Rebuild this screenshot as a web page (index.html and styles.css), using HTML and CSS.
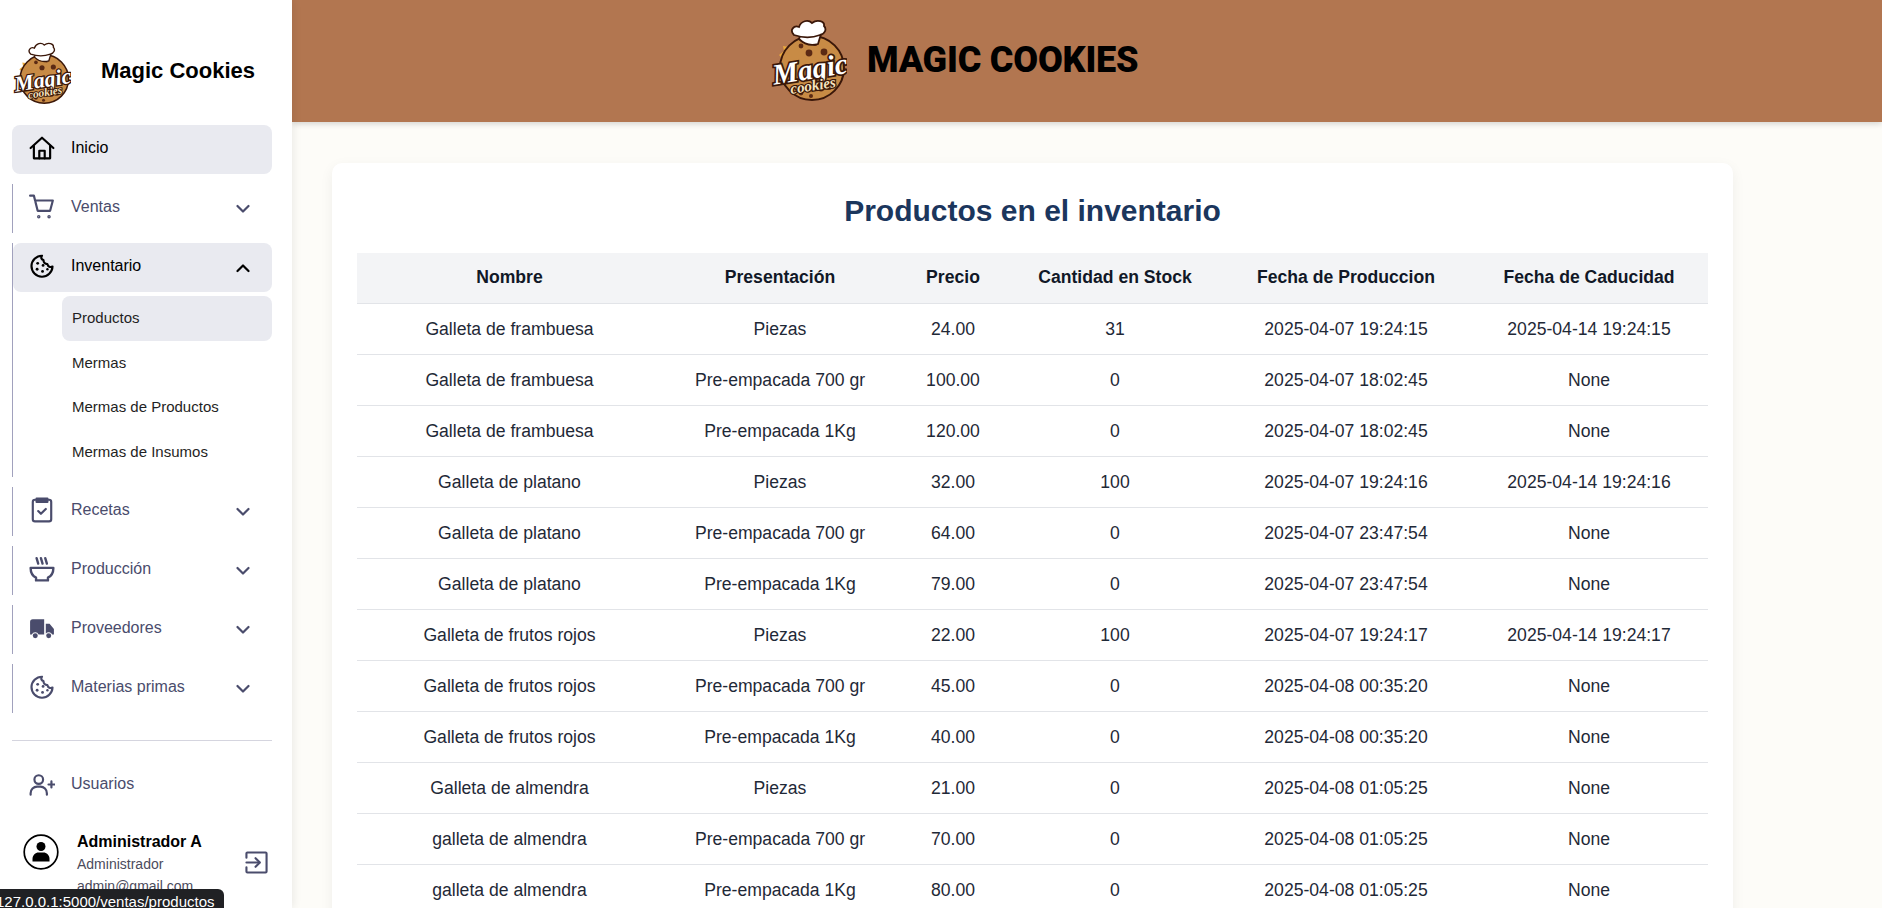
FILE: index.html
```html
<!DOCTYPE html>
<html lang="es">
<head>
<meta charset="utf-8">
<title>Magic Cookies</title>
<link rel="stylesheet" href="styles.css">
</head>
<body>
<svg class="defs" width="0" height="0" aria-hidden="true">
  <defs>
    <symbol id="logo" viewBox="0 0 76 82">
      <path d="M8 36l5-4-1-5 6 1 4-5 30-3 7 4 5 8-6 12-40 2z" fill="#e9a93c"/>
      <circle cx="41" cy="49" r="32" fill="#c88b45" stroke="#3a1709" stroke-width="2"/>
      <circle cx="44" cy="24" r="3" fill="#5b2a14"/><circle cx="53" cy="33" r="3.400" fill="#5b2a14"/>
      <circle cx="38" cy="34" r="3.400" fill="#5b2a14"/><circle cx="30" cy="27" r="2.400" fill="#5b2a14"/>
      <circle cx="50" cy="69" r="3.400" fill="#5b2a14"/><circle cx="58" cy="68" r="3" fill="#5b2a14"/>
      <circle cx="30" cy="74" r="2.400" fill="#5b2a14"/><circle cx="40" cy="77" r="2" fill="#5b2a14"/>
      <path d="M28 20l3-9 19 4-3 10c-7 2-14 0-19-5z" fill="#fff" stroke="#3a1709" stroke-width="1.800"/>
      <path d="M23 16c-5-5 0-10 5-8 2-6 9-8 13-4 5-4 13-2 12 3 3 3 1 8-4 9-8 3-17 3-26 0z" fill="#fff" stroke="#3a1709" stroke-width="1.800"/>
      <text class="logo-magic" x="1" y="60" transform="rotate(-9 38 50)">Magic</text>
      <text class="logo-cookies" x="18" y="72" transform="rotate(-9 38 60)">cookies</text>
    </symbol>
    <symbol id="cookie" viewBox="0 0 24 24">
      <path d="M12 2.500a9.700 9.700 0 1 0 9.700 10c-2.200 1-4.200 0-4.700-2.200-2.200 0-3.700-1.500-3.600-3.700-2.200-.5-2.600-2.400-1.400-4.100z" fill="none" stroke="currentColor" stroke-width="2" stroke-linejoin="round"/>
      <circle cx="8" cy="9.500" r="1.300" fill="currentColor"/><circle cx="13" cy="11.500" r="1.300" fill="currentColor"/>
      <circle cx="7.500" cy="15" r="1.300" fill="currentColor"/><circle cx="12.500" cy="17" r="1.300" fill="currentColor"/>
      <circle cx="17" cy="15" r="1.100" fill="currentColor"/>
    </symbol>
    <symbol id="chev-down" viewBox="0 0 14 10">
      <path d="M1.500 2l5.500 5.500L12.500 2" fill="none" stroke="currentColor" stroke-width="2.200" stroke-linecap="round" stroke-linejoin="round"/>
    </symbol>
    <symbol id="chev-up" viewBox="0 0 14 10">
      <path d="M1.500 8L7 2.500 12.500 8" fill="none" stroke="currentColor" stroke-width="2.200" stroke-linecap="round" stroke-linejoin="round"/>
    </symbol>
  </defs>
</svg>

<div class="app">
  <aside class="sidebar">
    <div class="brand">
      <svg class="brand-logo"><use href="#logo"/></svg>
      <span class="brand-name">Magic Cookies</span>
    </div>
    <nav class="nav">
      <a class="item active">
        <svg class="icon" viewBox="0 0 24 24" fill="none" stroke="currentColor" stroke-width="2" stroke-linejoin="round" stroke-linecap="round"><path d="M1.500 12L12 2.500 22.500 12"/><path d="M4.500 10v11.500h15V10"/><path d="M9.500 21.500v-7h5v7"/></svg>
        <span class="label">Inicio</span>
      </a>
      <div class="group">
        <a class="item">
          <svg class="icon" viewBox="0 0 24 24" fill="none" stroke="currentColor" stroke-width="2" stroke-linejoin="round" stroke-linecap="round"><path d="M1 1.500h3.500l3.500 14h11.500L22 6H5.500"/><circle cx="9" cy="21" r=".6"/><circle cx="18.500" cy="21" r=".6"/></svg>
          <span class="label">Ventas</span>
          <svg class="chev"><use href="#chev-down"/></svg>
        </a>
      </div>
      <div class="group">
        <a class="item open">
          <svg class="icon"><use href="#cookie"/></svg>
          <span class="label">Inventario</span>
          <svg class="chev"><use href="#chev-up"/></svg>
        </a>
        <div class="sub">
          <a class="sub-item current">Productos</a>
          <a class="sub-item">Mermas</a>
          <a class="sub-item">Mermas de Productos</a>
          <a class="sub-item">Mermas de Insumos</a>
        </div>
      </div>
      <div class="group">
        <a class="item">
          <svg class="icon" viewBox="0 0 24 24" fill="none" stroke="currentColor" stroke-width="2" stroke-linejoin="round" stroke-linecap="round"><rect x="3.500" y="2.500" width="17" height="20" rx="2"/><path d="M7 1.500h10v3H7z" fill="currentColor"/><path d="M8.500 13l2.500 2.500 4.500-4.500"/></svg>
          <span class="label">Recetas</span>
          <svg class="chev"><use href="#chev-down"/></svg>
        </a>
      </div>
      <div class="group">
        <a class="item">
          <svg class="icon" viewBox="0 0 24 24" fill="none" stroke="currentColor" stroke-width="2.200" stroke-linejoin="round" stroke-linecap="round"><path d="M1.500 11h21c0 4-2 7.500-5 9v2.500h-11V20c-3-1.500-5-5-5-9z"/><path d="M7 2l1.500 5M11 2l1.500 5M15 2l1.500 5"/></svg>
          <span class="label">Producción</span>
          <svg class="chev"><use href="#chev-down"/></svg>
        </a>
      </div>
      <div class="group">
        <a class="item">
          <svg class="icon" viewBox="0 0 24 24" fill="currentColor"><path d="M1 6.500a2.500 2.500 0 0 1 2.500-2.500H14v14H8.900a3.500 3.500 0 0 0-6.300 0H1zM15.500 8h3.500l4 5v5h-1.600a3.500 3.500 0 0 0-5.900-.9z"/><circle cx="5.800" cy="19.200" r="2.300"/><circle cx="18.200" cy="19.200" r="2.300"/></svg>
          <span class="label">Proveedores</span>
          <svg class="chev"><use href="#chev-down"/></svg>
        </a>
      </div>
      <div class="group">
        <a class="item">
          <svg class="icon"><use href="#cookie"/></svg>
          <span class="label">Materias primas</span>
          <svg class="chev"><use href="#chev-down"/></svg>
        </a>
      </div>
    </nav>
    <div class="footer">
      <a class="item plain">
        <svg class="icon" viewBox="0 0 24 24" fill="none" stroke="currentColor" stroke-width="2" stroke-linecap="round"><circle cx="9" cy="7" r="4"/><path d="M1.500 21v-1.500a6 6 0 0 1 6-6h3a6 6 0 0 1 6 6V21"/><path d="M18 11.500h5.500M20.700 8.700v5.600"/></svg>
        <span class="label">Usuarios</span>
      </a>
      <div class="user">
        <svg class="avatar" viewBox="0 0 36 36"><circle cx="18" cy="18" r="16.800" fill="#fff" stroke="#000" stroke-width="1.700"/><circle cx="18" cy="12.500" r="4.500" fill="#000"/><path d="M9.500 27.500v-2.500c0-4 3-6.500 6-6.500h5c3 0 6 2.500 6 6.500v2.500z" fill="#000"/></svg>
        <div class="who">
          <div class="who-name">Administrador A</div>
          <div class="who-meta">Administrador</div>
          <div class="who-meta">admin@gmail.com</div>
        </div>
        <svg class="logout" viewBox="0 0 24 24" fill="none" stroke="currentColor" stroke-width="2.200" stroke-linecap="round" stroke-linejoin="round"><path d="M1.500 7V2.500a1 1 0 0 1 1-1h19a1 1 0 0 1 1 1v19a1 1 0 0 1-1 1h-19a1 1 0 0 1-1-1V17"/><path d="M1.500 12H15"/><path d="M11 7.500l4.500 4.500-4.500 4.500"/></svg>
      </div>
    </div>
  </aside>

  <main class="main">
    <header class="topbar">
      <svg class="top-logo"><use href="#logo"/></svg>
      <h1 class="top-title">MAGIC COOKIES</h1>
    </header>
    <section class="content">
      <div class="card">
        <h2 class="card-title">Productos en el inventario</h2>
        <table class="stock">
          <colgroup>
            <col class="c1"><col class="c2"><col class="c3"><col class="c4"><col class="c5"><col class="c6">
          </colgroup>
          <thead>
            <tr><th>Nombre</th><th>Presentación</th><th>Precio</th><th>Cantidad en Stock</th><th>Fecha de Produccion</th><th>Fecha de Caducidad</th></tr>
          </thead>
          <tbody>
            <tr><td>Galleta de frambuesa</td><td>Piezas</td><td>24.00</td><td>31</td><td>2025-04-07 19:24:15</td><td>2025-04-14 19:24:15</td></tr>
            <tr><td>Galleta de frambuesa</td><td>Pre-empacada 700 gr</td><td>100.00</td><td>0</td><td>2025-04-07 18:02:45</td><td>None</td></tr>
            <tr><td>Galleta de frambuesa</td><td>Pre-empacada 1Kg</td><td>120.00</td><td>0</td><td>2025-04-07 18:02:45</td><td>None</td></tr>
            <tr><td>Galleta de platano</td><td>Piezas</td><td>32.00</td><td>100</td><td>2025-04-07 19:24:16</td><td>2025-04-14 19:24:16</td></tr>
            <tr><td>Galleta de platano</td><td>Pre-empacada 700 gr</td><td>64.00</td><td>0</td><td>2025-04-07 23:47:54</td><td>None</td></tr>
            <tr><td>Galleta de platano</td><td>Pre-empacada 1Kg</td><td>79.00</td><td>0</td><td>2025-04-07 23:47:54</td><td>None</td></tr>
            <tr><td>Galleta de frutos rojos</td><td>Piezas</td><td>22.00</td><td>100</td><td>2025-04-07 19:24:17</td><td>2025-04-14 19:24:17</td></tr>
            <tr><td>Galleta de frutos rojos</td><td>Pre-empacada 700 gr</td><td>45.00</td><td>0</td><td>2025-04-08 00:35:20</td><td>None</td></tr>
            <tr><td>Galleta de frutos rojos</td><td>Pre-empacada 1Kg</td><td>40.00</td><td>0</td><td>2025-04-08 00:35:20</td><td>None</td></tr>
            <tr><td>Galleta de almendra</td><td>Piezas</td><td>21.00</td><td>0</td><td>2025-04-08 01:05:25</td><td>None</td></tr>
            <tr><td>galleta de almendra</td><td>Pre-empacada 700 gr</td><td>70.00</td><td>0</td><td>2025-04-08 01:05:25</td><td>None</td></tr>
            <tr><td>galleta de almendra</td><td>Pre-empacada 1Kg</td><td>80.00</td><td>0</td><td>2025-04-08 01:05:25</td><td>None</td></tr>
          </tbody>
        </table>
      </div>
    </section>
  </main>
</div>
<div class="status">127.0.0.1:5000/ventas/productos</div>
</body>
</html>
```

FILE: styles.css
```css
* { box-sizing: border-box; }
html, body { margin: 0; height: 100%; overflow: hidden; }
body { font-family: "Liberation Sans", Arial, sans-serif; background: #fdfcf8; color: #111827; }
.defs { position: absolute; }
.logo-magic { font: italic bold 29px "Liberation Serif", serif; fill: #fff; stroke: #3a1709; stroke-width: 3.500px; paint-order: stroke; }
.logo-cookies { font: italic bold 15px "Liberation Serif", serif; fill: #f6e3bf; stroke: #3a1709; stroke-width: 2.500px; paint-order: stroke; }

.app { display: flex; height: 908px; }

.sidebar { width: 292px; flex: none; background: #fff; box-shadow: 2px 0 8px rgba(0,0,0,.07); padding: 0 20px 0 12px; display: flex; flex-direction: column; position: relative; z-index: 2; overflow: hidden; }
.brand { height: 125px; display: flex; align-items: center; padding-top: 16px; }
.brand-logo { width: 58px; height: 62px; flex: none; margin-left: 1px; margin-top: 4px; }
.brand-name { font-size: 22px; font-weight: 700; color: #000; margin-left: 30px; }

.nav { display: flex; flex-direction: column; gap: 10px; }
.group { border-left: 1px solid #a1a1bd; }
.item { display: flex; align-items: center; height: 49px; padding-left: 16px; padding-right: 22px; color: #4a4c6c; border-radius: 8px; font-size: 16px; }
.item.active, .item.open { background: #e9eaf0; color: #000; }
.item.active { padding-left: 17px; }
.icon { width: 26px; height: 26px; flex: none; margin-top: -3px; }
.label { margin-left: 16px; flex: 1; padding-bottom: 3px; }
.chev { width: 14px; height: 10px; flex: none; margin-top: 1px; }

.sub { padding: 4px 0 2px 49px; display: flex; flex-direction: column; }
.sub-item { height: 44.750px; display: flex; align-items: center; padding-left: 10px; font-size: 15px; color: #1f1f24; border-radius: 8px; padding-bottom: 2px; }
.sub-item.current { background: #e9eaf0; }

.footer { margin-top: 27px; border-top: 1px solid #d5d5df; padding-top: 18px; }
.item.plain { padding-left: 17px; }
.plain .label { padding-bottom: 0; }
.plain .icon { margin-top: 3px; }
.user { display: flex; align-items: flex-start; margin-top: 23px; padding-left: 11px; }
.avatar { width: 36px; height: 36px; flex: none; margin-top: 3px; }
.who { margin-left: 18px; flex: 1; white-space: nowrap; }
.who-name { font-size: 16px; font-weight: 700; color: #000; line-height: 22px; }
.who-meta { font-size: 14px; color: #4b4b5c; line-height: 21px; margin-top: 1px; }
.logout { width: 23px; height: 23px; flex: none; color: #4a4c6c; margin-top: 20px; margin-right: 4px; }

.main { flex: 1; min-width: 0; display: flex; flex-direction: column; }
.topbar { height: 122px; flex: none; background: #b27650; box-shadow: 0 2px 6px rgba(0,0,0,.16); display: flex; align-items: center; padding-left: 479px; position: relative; z-index: 1; }
.top-logo { width: 76px; height: 82px; flex: none; margin-top: -3px; }
.top-title { margin: -3px 0 0 20px; font-family: Roboto, sans-serif; font-weight: 900; font-size: 36px; color: #000; letter-spacing: -.2px; }

.content { padding: 41px 0 0 40px; }
.card { width: 1401px; background: #fff; border-radius: 10px; box-shadow: 0 4px 14px rgba(0,0,0,.06); padding: 0 25px 25px; }
.card-title { margin: 0; height: 90px; display: flex; align-items: center; justify-content: center; font-size: 30px; font-weight: 700; color: #1b365d; padding-top: 6px; }

.stock { width: 1351px; table-layout: fixed; border-collapse: collapse; font-size: 17.600px; }
.c1 { width: 305px; } .c2 { width: 236px; } .c3 { width: 110px; }
.c4 { width: 214px; } .c5 { width: 248px; } .c6 { width: 238px; }
.stock th { height: 50px; background: #f3f4f6; font-weight: 700; color: #111827; text-align: center; border-bottom: 1px solid #e2e4e8; padding: 0; }
.stock td { height: 51px; text-align: center; color: #1f2937; border-bottom: 1px solid #e2e4e8; padding: 2px 0 0; }

.status { position: absolute; left: 0; bottom: 0; width: 224px; height: 19px; background: #202124; color: #fff; font-size: 15px; line-height: 25px; border-top-right-radius: 6px; white-space: nowrap; overflow: hidden; text-indent: -4px; z-index: 5; }
```
